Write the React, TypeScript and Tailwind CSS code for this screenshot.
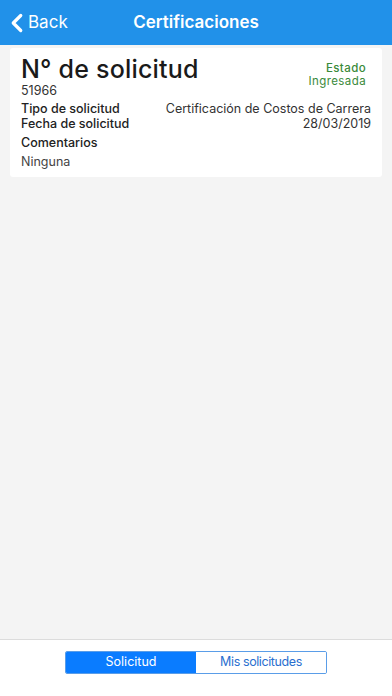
import { ChevronLeft } from 'lucide-react';

const ROWS = [
  { label: 'Tipo de solicitud', value: 'Certificación de Costos de Carrera' },
  { label: 'Fecha de solicitud', value: '28/03/2019' },
];

export default function App() {
  return (
    <div className="w-[392px] h-[696px] flex flex-col bg-[#f4f4f4] font-['Inter',sans-serif]">
      <div className="h-[45px] bg-[#2191e9] flex items-center relative shrink-0">
        <div className="flex items-center text-white pl-[2px]">
          <ChevronLeft size={30} strokeWidth={2.6} />
          <span className="text-[17px] -ml-[4px]">Back</span>
        </div>
        <div className="absolute left-0 right-0 text-center text-white text-[17px] font-semibold pointer-events-none">
          Certificaciones
        </div>
      </div>

      <div className="flex-1 pt-[3px] px-[10px]">
        <div className="bg-white rounded-[3px] px-[11px] pt-[7px] pb-[8px]">
          <div className="flex justify-between">
            <div>
              <div className="text-[25px] leading-[29px] font-medium tracking-[0.2px] text-[#1a1a1a]">N° de solicitud</div>
              <div className="text-[12.5px] leading-[14px] text-[#333]">51966</div>
            </div>
            <div className="text-right text-[11.5px] leading-[13px] tracking-[0.4px] text-[#3a8a3a] pt-[7px] pr-[5px]">
              <div className="font-medium">Estado</div>
              <div>Ingresada</div>
            </div>
          </div>
          <div className="mt-[3px]">
            {ROWS.map((r) => (
              <div key={r.label} className="flex justify-between text-[12.5px] leading-[15px]">
                <span className="font-medium text-[#222]">{r.label}</span>
                <span className="text-[#333]">{r.value}</span>
              </div>
            ))}
          </div>
          <div className="mt-[4px] text-[12.5px] leading-[15px] font-medium text-[#222]">Comentarios</div>
          <div className="mt-[4px] text-[12.5px] leading-[15px] text-[#444]">Ninguna</div>
        </div>
      </div>

      <div className="h-[57px] shrink-0 bg-white border-t border-[#dcdcdc] flex justify-center pt-[11px]">
        <div className="flex h-[23px] w-[262px] border border-[#5a9de8] rounded-[2px] overflow-hidden text-[12.5px]">
          <div className="w-1/2 bg-[#0a7cff] text-white flex items-center justify-center">Solicitud</div>
          <div className="w-1/2 bg-white text-[#2a6fcf] flex items-center justify-center tracking-[-0.4px]">Mis solicitudes</div>
        </div>
      </div>
    </div>
  );
}
